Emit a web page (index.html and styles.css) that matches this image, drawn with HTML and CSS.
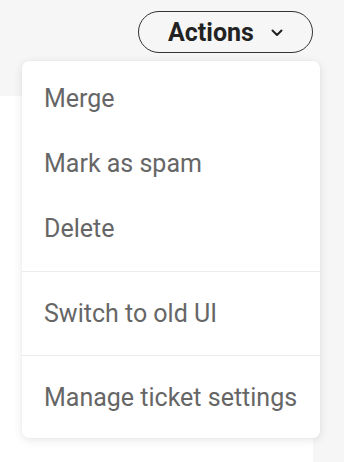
FILE: index.html
```html
<!DOCTYPE html>
<html lang="en">
<head>
<meta charset="utf-8">
<title>Actions menu</title>
<link rel="stylesheet" href="styles.css">
</head>
<body>
<div class="page">
  <header class="topbar">
    <button class="actions-btn" type="button">
      <span class="actions-label">Actions</span>
      <svg class="chevron" width="12" height="8" viewBox="0 0 12 8" aria-hidden="true"><path d="M1.5 1.5 L6 6 L10.5 1.5" fill="none" stroke="#222" stroke-width="2" stroke-linecap="round" stroke-linejoin="round"/></svg>
    </button>
  </header>
  <main class="panel"></main>
  <div class="menu" role="menu">
    <div class="section section-first">
      <div class="item">Merge</div>
      <div class="item">Mark as spam</div>
      <div class="item">Delete</div>
    </div>
    <div class="section">
      <div class="item">Switch to old UI</div>
    </div>
    <div class="section section-last">
      <div class="item">Manage ticket settings</div>
    </div>
  </div>
</div>
</body>
</html>
```
FILE: styles.css
```css
html, body {
  margin: 0;
  padding: 0;
  background: #f6f6f6;
  font-family: Roboto, "Liberation Sans", Arial, sans-serif;
}
.page {
  position: relative;
  width: 344px;
  height: 462px;
  overflow: hidden;
  display: flex;
  flex-direction: column;
}
.topbar {
  height: 96px;
  display: flex;
  justify-content: flex-end;
  align-items: flex-start;
  padding: 11px 31px 0 0;
  box-sizing: border-box;
}
.actions-btn {
  width: 175px;
  height: 42px;
  box-sizing: border-box;
  border: 1px solid #333;
  border-radius: 21px;
  background: transparent;
  display: flex;
  align-items: center;
  padding: 0 0 0 29px;
  gap: 17px;
  font-family: Roboto, "Liberation Sans", Arial, sans-serif;
  font-size: 25px;
  font-weight: 700;
  color: #222;
  cursor: pointer;
}
.chevron {
  display: block;
  margin-top: 1px;
}
.panel {
  flex: 1;
  background: #fff;
  margin-right: 31px;
}
.menu {
  position: absolute;
  left: 22px;
  top: 61px;
  width: 298px;
  background: #fff;
  border-radius: 7px;
  box-shadow: 0 2px 10px rgba(0, 0, 0, 0.10), 0 0 2px rgba(0, 0, 0, 0.05);
}
.section {
  padding: 9px 0;
  border-top: 1px solid #ececec;
}
.section-first {
  border-top: none;
  padding: 5px 0 10px;
}
.section-last {
  padding: 9px 0 8px;
}
.item {
  height: 65px;
  display: flex;
  align-items: center;
  padding-left: 22px;
  font-size: 25px;
  color: #666;
}
```
